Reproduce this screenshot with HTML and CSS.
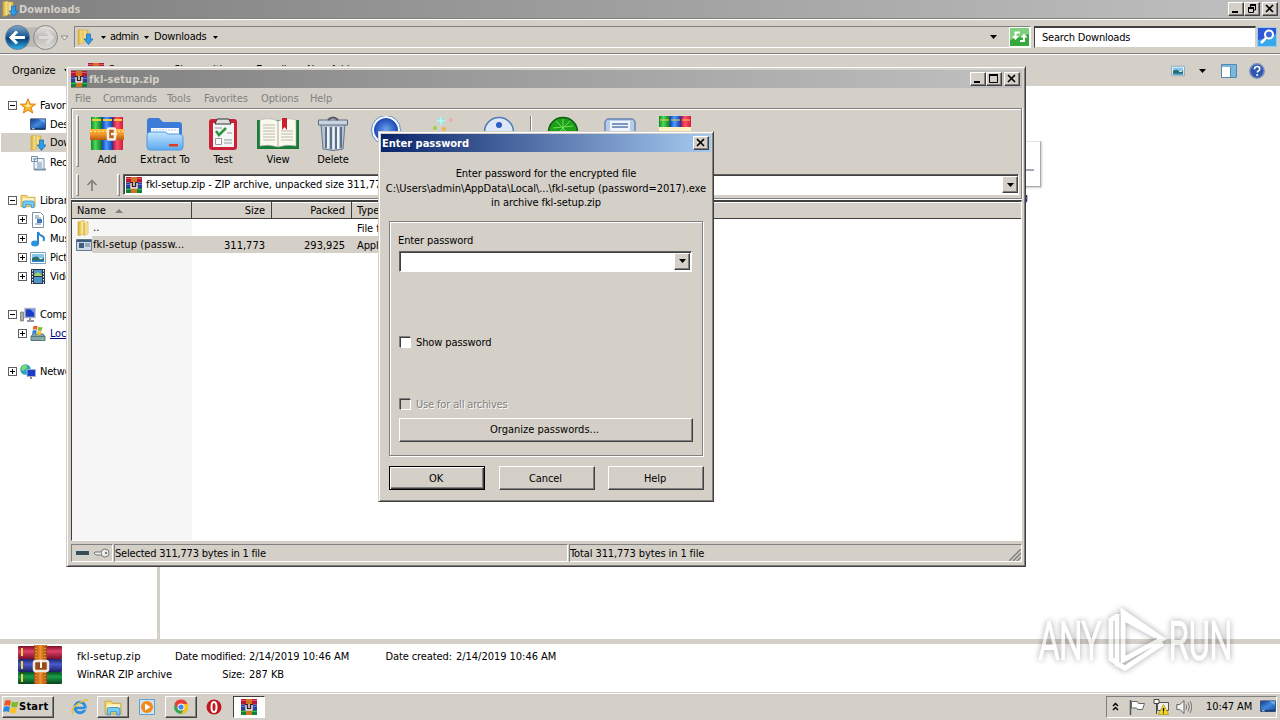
FILE: index.html
```html
<!DOCTYPE html>
<html lang="en">
<head>
  <meta charset="UTF-8">
  <title>Downloads</title>
  <link rel="stylesheet" href="styles.css">
</head>
<body>
  <svg class="defs" width="0" height="0">
    <defs>
      <linearGradient id="gFolder" x1="0" x2="1"><stop offset="0" stop-color="#d9ab2e"/><stop offset=".5" stop-color="#fdf0a8"/><stop offset="1" stop-color="#e2bd4c"/></linearGradient>
      <linearGradient id="gBlueFolder" x1="0" y1="0" x2="0" y2="1"><stop offset="0" stop-color="#c4e6ff"/><stop offset="1" stop-color="#5aa9ee"/></linearGradient>
      <linearGradient id="gNav" x1="0" y1="0" x2="0" y2="1"><stop offset="0" stop-color="#7fa6c4"/><stop offset=".45" stop-color="#1c5a94"/><stop offset=".55" stop-color="#0b3d78"/><stop offset="1" stop-color="#2fb5ee"/></linearGradient>
      <linearGradient id="gNavOff" x1="0" y1="0" x2="0" y2="1"><stop offset="0" stop-color="#e4e2de"/><stop offset=".5" stop-color="#bdbbb7"/><stop offset="1" stop-color="#dedcd8"/></linearGradient>
      <linearGradient id="gRed" x1="0" x2="1"><stop offset="0" stop-color="#b5123a"/><stop offset=".4" stop-color="#ff5068"/><stop offset="1" stop-color="#d01c3c"/></linearGradient>
      <linearGradient id="gGreen" x1="0" x2="1"><stop offset="0" stop-color="#0c8a2c"/><stop offset=".4" stop-color="#4fd85c"/><stop offset="1" stop-color="#0b7524"/></linearGradient>
      <linearGradient id="gBlue" x1="0" x2="1"><stop offset="0" stop-color="#1440b4"/><stop offset=".4" stop-color="#4c9cff"/><stop offset="1" stop-color="#1038a8"/></linearGradient>
      <linearGradient id="gBookR" x1="0" y1="0" x2="0" y2="1"><stop offset="0" stop-color="#7d1026"/><stop offset=".4" stop-color="#e0406a"/><stop offset="1" stop-color="#7a0f28"/></linearGradient>
      <linearGradient id="gBookB" x1="0" y1="0" x2="0" y2="1"><stop offset="0" stop-color="#222468"/><stop offset=".4" stop-color="#4a5ccc"/><stop offset="1" stop-color="#1e1f60"/></linearGradient>
      <linearGradient id="gBookG" x1="0" y1="0" x2="0" y2="1"><stop offset="0" stop-color="#0a5022"/><stop offset=".4" stop-color="#18a048"/><stop offset="1" stop-color="#08401a"/></linearGradient>
      <linearGradient id="gBelt" x1="0" x2="1"><stop offset="0" stop-color="#a34a0e"/><stop offset=".5" stop-color="#f0922c"/><stop offset="1" stop-color="#9a420c"/></linearGradient>
      <linearGradient id="gStrap" x1="0" y1="0" x2="0" y2="1"><stop offset="0" stop-color="#ffc23c"/><stop offset=".5" stop-color="#f0942c"/><stop offset="1" stop-color="#b85a10"/></linearGradient>
      <linearGradient id="gScreen" x1="0" y1="0" x2="1" y2="1"><stop offset="0" stop-color="#123a88"/><stop offset=".5" stop-color="#4288dc"/><stop offset="1" stop-color="#1448a0"/></linearGradient>
      <radialGradient id="gBall"><stop offset="0" stop-color="#6fa4f0"/><stop offset="1" stop-color="#1c4cb8"/></radialGradient>
    </defs>
    <symbol id="rar" viewBox="0 0 46 40">
      <rect x="1" y="1" width="44" height="13" rx="1" fill="url(#gBookR)"/><rect x="1" y="14" width="44" height="13" rx="1" fill="url(#gBookB)"/><rect x="1" y="27" width="44" height="12" rx="1" fill="url(#gBookG)"/>
      <path d="M4 3h2v8H4zM4 16h2v8H4zM4 29h2v8H4z" fill="#f3d24a"/>
      <rect x="17" width="13" height="39" fill="url(#gBelt)"/>
      <path d="M19 0v13M28 0v13M19 27v12M28 27v12" stroke="#ffd27a" stroke-dasharray="1 2"/>
      <rect x="17" y="16" width="14" height="10" rx="2" fill="#9a4a14" stroke="#eeeae2" stroke-width="2.5"/><path d="M24 15v8" stroke="#fff" stroke-width="2"/>
    </symbol>
    <symbol id="rar16" viewBox="0 0 16 16">
      <path fill="#b81838" d="M0 0h16v5.500H0z"/><path fill="#2c3ca0" d="M0 5.500h16V11H0z"/><path fill="#128038" d="M0 11h16v5H0z"/>
      <path fill="#e05070" d="M0 1h16v1H0z"/><path fill="#5a78dc" d="M0 7h16v1H0z"/><path fill="#3ab858" d="M0 12h16v1H0z"/>
      <path fill="#d07420" d="M5 0h6v16H5z"/><path fill="#3c2020" d="M4 5h8v7H4z"/><path fill="none" stroke="#fff" stroke-width="1.3" d="M5 6v5h6V6M8 5v4"/>
    </symbol>
    <symbol id="folder" viewBox="0 0 16 16"><path fill="url(#gFolder)" stroke="#c9a33a" stroke-width=".6" d="M2 2l6-1.5V14l-5 1.5H2zM8 2h4v12l-4 1.5z"/><path d="M8 2l3 1v12" fill="none" stroke="#fff6c4"/></symbol>
    <symbol id="dl" viewBox="0 0 16 16"><path fill="url(#gFolder)" stroke="#cfa93f" stroke-width=".6" d="M1 1l5-1v14l-5 1.5zM6 1h5v12H6z"/><path fill="#2f9be8" stroke="#1668b0" stroke-width=".7" d="M9.500 5h4v5H16l-4.500 5.500L7 10h2.500z"/></symbol>
    <symbol id="lib" viewBox="0 0 17 16"><path fill="#f4da78" stroke="#c79a2e" stroke-width=".8" d="M1 2h6l1 2h8v10H1z"/><path d="M3 5h12v3H3z" fill="#fff6c8"/><path fill="#74cdf4" stroke="#348cc4" stroke-width=".8" d="M3 15V10q0-2 2-2h8q2 0 2 2v5h-3v-3H6v3z"/></symbol>
    <symbol id="winflag" viewBox="0 0 16 16"><path fill="#ee5a24" d="M2 2q3-2 6 0L7 7Q4 5.500 1 7z"/><path fill="#7ebc2c" d="M9 2.500q3 1.500 6.500 0L14 8q-3 1-6-.5z"/><path fill="#2a86dc" d="M1 8q3-1.500 6 0l-1 5q-3-1.500-6 0z"/><path fill="#fcc01c" d="M8 8.500q3 1.500 6 .3L12.500 14q-3 1-5.500-.5z"/></symbol>
    <symbol id="monitor" viewBox="0 0 17 14"><path fill="url(#gScreen)" stroke="#35507c" d="M.5.5h16v11H.5z"/><path fill="#8cc4ff" opacity=".6" d="M9 1h7v4z"/><path fill="#1c3c70" d="M1 10h15v2H1z"/><path fill="#d8e4f0" d="M2 10.500h3v1H2z"/></symbol>
    <symbol id="pic" viewBox="0 0 16 14"><path fill="#fff" stroke="#7fa0b8" d="M.5 1.500h15v11H.5z"/><path fill="#84c8f0" d="M2 3h12v4H2z"/><path fill="#2c6e6a" d="M2 7q5-3 7 0t5-1v5H2z"/><path fill="#2888c8" d="M2 9.500h12V11H2z"/></symbol>
    <symbol id="caret" viewBox="0 0 7 4"><path d="M0 0h7L3.500 4z"/></symbol>
    <symbol id="min" viewBox="0 0 12 10"><path d="M2 7h6v2H2z"/></symbol>
    <symbol id="max" viewBox="0 0 12 10"><path d="M1.500 1h8v7.500h-8z" fill="none" stroke="#000"/><path d="M1 0h9v2H1z"/></symbol>
    <symbol id="restore" viewBox="0 0 12 10"><path d="M4.500 3V1h5v5H8M2.500 4.500h5v4h-5z" fill="none" stroke="#000"/><path d="M4 0h6v2H4zM2 3h6v2H2z"/></symbol>
    <symbol id="x" viewBox="0 0 12 10"><path d="M2 1l7 7M9 1L2 8" stroke="#000" stroke-width="1.700"/></symbol>
  </svg>

  <div class="explorer">
    <div class="titlebar inactive">
      <svg class="i16"><use href="#dl"/></svg><span class="title">Downloads</span>
      <div class="winbtns"><b><svg><use href="#min"/></svg></b><b><svg><use href="#restore"/></svg></b><b class="close"><svg><use href="#x"/></svg></b></div>
    </div>
    <div class="addressbar">
      <svg class="nav" width="70" height="30" viewBox="0 0 70 30">
        <path d="M14 3q15 5 31 0v24q-16-5-31 0z" fill="#bcb9b3"/>
        <circle cx="16.500" cy="15.500" r="12" fill="url(#gNav)" stroke="#5f7f9a"/><path d="M10 15.500h14M16 9.500l-6 6 6 6" fill="none" stroke="#fff" stroke-width="3"/>
        <circle cx="44.500" cy="15.500" r="12" fill="url(#gNavOff)" stroke="#8a8884"/><path d="M38 15.500h13M45.500 9.500l6 6-6 6" fill="none" stroke="#dddbd7" stroke-width="3"/>
        <path d="M60 14h7l-3.500 4z" fill="#eee" stroke="#777" stroke-width=".8"/>
      </svg>
      <div class="crumbs">
        <svg class="i16"><use href="#dl"/></svg>
        <svg class="caret c1"><use href="#caret"/></svg><span class="c-admin">admin</span>
        <svg class="caret"><use href="#caret"/></svg><span class="c-down">Downloads</span>
        <svg class="caret"><use href="#caret"/></svg>
        <svg class="caret last"><use href="#caret"/></svg>
        <svg class="refresh" width="21" height="20"><path fill="#36a83e" stroke="#fff" d="M.5.5h20v19H.5z"/><path fill="#7ed07c" d="M1 1h19v6L1 13z"/><path d="M11 5.500H6.500v5M11 14h4V9" fill="none" stroke="#fff" stroke-width="2"/><path d="M3 9h7l-3.500 4zM11.500 10.500h7L15 6.500z" fill="#fff"/></svg>
      </div>
      <div class="search">Search Downloads</div>
      <svg class="searchbtn" width="20" height="20"><path fill="#2c56d4" stroke="#9cc8f4" d="M.5.500h19v19H.5z"/><path fill="#38a8ec" d="M1 13q9-1 18-6v12H1z"/><circle cx="12" cy="7.500" r="4" fill="#3a68dc" stroke="#fff" stroke-width="2"/><path d="M9 11l-5 5" stroke="#fff" stroke-width="2.500"/></svg>
    </div>
    <div class="cmdbar">
      <span class="t-org">Organize</span><svg class="caret c-org"><use href="#caret"/></svg>
      <svg class="i16 t-rar"><use href="#rar16"/></svg><span class="t-open">Open</span><span class="t-share">Share with</span><span class="t-mail">E-mail</span><span class="t-new">New folder</span>
      <svg class="t-view" width="14" height="12"><use href="#pic"/></svg><svg class="caret t-caret"><use href="#caret"/></svg>
      <svg class="t-pane" width="16" height="14"><path fill="#fff" stroke="#5486b4" d="M.5.5h15v13H.5z"/><path fill="#78b8dc" d="M10 3h5v10h-5zM1 1h14v2H1z"/><path d="M9.500 3v11" stroke="#5486b4"/></svg>
      <svg class="t-help" width="16" height="16"><circle cx="8" cy="8" r="7.200" fill="#2f56b0" stroke="#7990bc" stroke-width="1.500"/><path d="M5.500 6.200q0-2.700 2.700-2.700t2.500 2.400q0 1.300-1.400 2-1 .5-1 1.700" fill="none" stroke="#fff" stroke-width="1.700"/><circle cx="8.200" cy="12" r="1.100" fill="#fff"/></svg>
    </div>
    <div class="body">
      <div class="tree">
        <div class="node"><i class="pm minus"></i><svg class="i16"><path fill="#fcb82c" stroke="#e07a14" d="M8 .8l2 5.200 5.500.2-4.300 3.500 1.500 5.300L8 12l-4.700 3 1.500-5.300L.5 6.200 6 6z"/><path fill="#ffe68a" d="M8 3l1.200 4H12L8 9.500 4 7h3z"/></svg><span>Favorites</span></div>
        <div class="node sub"><svg class="i16"><use href="#monitor"/></svg><span>Desktop</span></div>
        <div class="node sub on"><svg class="i16"><use href="#dl"/></svg><span>Downloads</span></div>
        <div class="node sub"><svg class="i16"><path fill="#eef3f8" stroke="#7890a8" d="M5 3.500h9v11H4v-8zM1.500 1.500h6v5h-6z"/><path d="M7 8h5M7 10h5M7 12h5M3 4h3" stroke="#6c94b8"/><path d="M4 14.500h12" stroke="#7890a8" stroke-width="2"/></svg><span>Recent Places</span></div>
        <div class="node gap"><i class="pm minus"></i><svg class="i16"><use href="#lib"/></svg><span>Libraries</span></div>
        <div class="node sub"><i class="pm"></i><svg class="i16"><path fill="#fff" stroke="#8090a0" d="M2.500.5h8l3 3v12h-11z"/><path d="M5 4h4M5 6h6M5 12h6" stroke="#6888a8"/><path fill="#3c7cc4" d="M7 7h5v4H7z"/></svg><span>Documents</span></div>
        <div class="node sub"><i class="pm"></i><svg class="i16"><ellipse cx="5" cy="12.500" rx="4" ry="3" fill="#2a94dc"/><path d="M8 13V1q1 3 4 4t1.500 5" fill="none" stroke="#2a84cc" stroke-width="2"/></svg><span>Music</span></div>
        <div class="node sub"><i class="pm"></i><svg class="i16"><use href="#pic"/></svg><span>Pictures</span></div>
        <div class="node sub"><i class="pm"></i><svg class="i16"><path fill="#283848" d="M1 0h14v15H1z"/><path fill="#4c94cc" d="M4 1h8v6H4zM4 8h8v6H4z"/><path d="M2.500 1v14M13.500 1v14" stroke="#fff" stroke-dasharray="1.500 1.500"/><path fill="#a8d060" d="M5 5l3-2 4 3v1H4z"/></svg><span>Videos</span></div>
        <div class="node gap"><i class="pm minus"></i><svg class="i16"><path fill="#a8b0a8" stroke="#687068" stroke-width=".7" d="M.5 5h3v9h-3z"/><path fill="#1c3cc4" stroke="#a8b4c4" stroke-width="1.500" d="M5 1.500h10v9H5z"/><path fill="#6c98f8" d="M10 2h4v4z"/><path d="M10 11v2M7 14h7" stroke="#9098a8" stroke-width="2"/></svg><span>Computer</span></div>
        <div class="node sub link"><i class="pm"></i><svg class="i16"><path fill="#88a4ac" stroke="#587880" d="M1 10.500h14v4H1zM3 8h10l2 2.500H1z"/><use href="#winflag" width="11" height="11" x="2" y="-1"/><path d="M11 13h3" stroke="#6ef05c"/></svg><span>Local Disk (C:)</span></div>
        <div class="node gap"><i class="pm"></i><svg class="i16"><circle cx="5.500" cy="5.500" r="5.300" fill="#28a4b8"/><path fill="#7cd86c" d="M2 2q4-2 5 0T3 7q-3-1-1-5z"/><path fill="#1c3ccc" stroke="#a4b4cc" d="M7 5.500h8.500v7H7z"/><path d="M11 13v2" stroke="#888" stroke-width="2"/></svg><span>Network</span></div>
      </div>
      <div class="files">
        <div class="thumb"><span></span></div>
        <div class="fname">setup.png</div>
      </div>
    </div>
    <div class="details">
      <svg class="d-icon" width="46" height="40"><use href="#rar"/></svg>
      <div class="d-col"><span class="d-name">fkl-setup.zip</span><span>WinRAR ZIP archive</span></div>
      <div class="d-keys"><span>Date modified:</span><span>Size:</span></div>
      <div class="d-vals"><span>2/14/2019 10:46 AM</span><span>287 KB</span></div>
      <div class="d-keys k2"><span>Date created:</span></div>
      <div class="d-vals"><span>2/14/2019 10:46 AM</span></div>
    </div>
  </div>

  <div class="taskbar">
    <div class="start"><svg class="i16"><use href="#winflag"/></svg><span>Start</span></div>
    <svg class="q q-ie" width="18" height="16"><circle cx="9" cy="8.500" r="5.200" fill="none" stroke="#2a8fe0" stroke-width="3"/><path d="M5 9h9" stroke="#2a8fe0" stroke-width="2.500"/><path d="M11 11h4l-1-2h2z" fill="#d4d0c8"/><path d="M2 15q-3-5 5-10t10-4" fill="none" stroke="#e8c030" stroke-width="1.500"/></svg>
    <div class="task"><svg class="i18"><use href="#lib"/></svg></div>
    <svg class="q q-wmp" width="16" height="16"><path fill="#cfe4f4" stroke="#5ca0d4" d="M.5.500h15v15H.5z"/><circle cx="8" cy="8" r="6" fill="#f08a18"/><path fill="#fff" d="M6 4.500l5.500 3.500L6 11.500z"/></svg>
    <div class="task t2"><svg class="i16" viewBox="0 0 16 16"><circle cx="8" cy="8" r="7" fill="#34a853"/><path fill="#e84033" d="M1.500 5A7 7 0 0 1 14.500 5H8l-3 5z"/><path fill="#fbc118" d="M14.500 5H8l3 5-3 5a7 7 0 0 0 6.500-10z"/><circle cx="8" cy="8" r="3.500" fill="#fff"/><circle cx="8" cy="8" r="2.600" fill="#4285f4"/></svg></div>
    <svg class="q q-op" width="16" height="16"><circle cx="8" cy="8" r="7.500" fill="#c4151c"/><ellipse cx="8" cy="8" rx="2.500" ry="5" fill="#c4151c" stroke="#fff" stroke-width="2"/></svg>
    <div class="task pressed"><svg class="i16"><use href="#rar16"/></svg></div>
    <div class="tray">
      <svg width="8" height="10"><path d="M1 4l2.500-2.500L6 4M1 8l2.500-2.500L6 8" fill="none" stroke="#000" stroke-width="1.500"/></svg>
      <svg class="flag" width="17" height="16"><path d="M1.500 1v15" stroke="#555" stroke-width="1.500"/><path fill="#fff" stroke="#666" d="M2.500 2.500h6l1 2h6l-2 6h-5l-1-1.500h-5z"/></svg>
      <svg class="net" width="16" height="16"><path fill="#eee" stroke="#555" d="M4.500 3.500h11v8h-11z"/><path fill="#fff" stroke="#444" d="M1 .5h5v4H1zM3.500 5v10"/><path fill="#fcd920" stroke="#a88c10" stroke-width=".7" d="M10.500 5.500l5.200 10H5.300z"/><path d="M10.500 9v3.500M10.500 13.500v1" stroke="#000" stroke-width="1.300"/></svg>
      <svg class="vol" width="16" height="16"><path fill="#f4f4f4" stroke="#666" d="M.8 5.500h3L8 1.500v13l-4.200-4h-3z"/><path d="M10 5.500q1.500 2.500 0 5M12 3.500q3 4.500 0 9M14 2q3.500 6 0 12" fill="none" stroke="#777"/></svg>
      <span class="clock">10:47 AM</span>
      <svg class="desk" width="16" height="14"><use href="#monitor"/></svg>
    </div>
  </div>

  <div class="winrar">
    <div class="titlebar inactive">
      <svg class="i16"><use href="#rar16"/></svg><span class="title">fkl-setup.zip</span>
      <div class="winbtns"><b><svg><use href="#min"/></svg></b><b><svg><use href="#max"/></svg></b><b class="close"><svg><use href="#x"/></svg></b></div>
    </div>
    <div class="menu"><span>File</span><span>Commands</span><span>Tools</span><span>Favorites</span><span>Options</span><span>Help</span></div>
    <div class="rebar">
      <div class="tools">
        <i class="grip"></i>
        <div class="tool add"><svg width="36" height="36"><path fill="url(#gGreen)" d="M2 1h11v33H2z"/><path fill="url(#gBlue)" d="M13 1h11v33H13z"/><path fill="url(#gRed)" d="M24 1h10v33H24z"/><path d="M3 4h9M14 4h9M25 4h8" stroke="#f4cc3c" stroke-width="2"/><path fill="url(#gStrap)" d="M1 13h34v11H1z"/><path d="M1 15.500h34" stroke="#ffe08c" stroke-dasharray="2 2"/><rect x="19" y="12.500" width="7" height="11" rx="1" fill="#b8641c" stroke="#f6f0e4" stroke-width="2.500"/><path d="M22 18h6" stroke="#f6f0e4" stroke-width="2.500"/></svg><span>Add</span></div>
        <div class="tool ext"><svg width="38" height="36"><path fill="#3c7cd8" d="M1 5q0-3 3-3h9l4 4h16q3 0 3 3v20H1z"/><path fill="#fff" d="M5 12h28v10H5z"/><path d="M7 14h25" stroke="#aac8e0" stroke-dasharray="2 1"/><path fill="url(#gBlueFolder)" stroke="#4c98e4" d="M1 19q0-3 3-3h15l3 2h11q4 0 4 3v10q0 3-3 3H4q-3 0-3-3z"/><path fill="#dc3c24" d="M23 28h9v2.500h-9z"/></svg><span>Extract To</span></div>
        <div class="tool tst"><svg width="32" height="36"><rect x="2" y="3" width="28" height="31" rx="3" fill="#cc1f38"/><path fill="#f4f6f6" d="M6 7h21v24H6z"/><path fill="#ddd" stroke="#333" d="M10 3h12l2 5H8z"/><path d="M9 15l3 4 7-7" fill="none" stroke="#2c9444" stroke-width="2.500"/><path d="M8 12h7M20 17h5M17 24h8M17 27h8" stroke="#999"/><path fill="#fff" stroke="#999" d="M8.500 22.500h6v6h-6z"/></svg><span>Test</span></div>
        <div class="tool vw"><svg width="44" height="36"><path fill="#187c38" d="M1 4h42v29H1z"/><path fill="#fbf8ee" stroke="#aaa" stroke-width=".6" d="M4 4q9-3 18 1 9-4 18-1v26q-9-2-18 1-9-3-18-1z"/><path d="M22 5v26" stroke="#aaa"/><path d="M7 9h12M7 12h12M7 15h12M7 18h12M7 21h12M7 24h12M25 15h12M25 18h12M25 21h12M25 24h12" stroke="#b8b8b0"/><path fill="#c8202c" d="M26 2h5v12l-2.500-3-2.500 3z"/></svg><span>View</span></div>
        <div class="tool del"><svg width="32" height="36"><path fill="#b4c4d4" stroke="#68788c" d="M4 8h24l-2 25q-10 3-20 0z"/><path d="M9 11v21M14 11v22M19 11v22M24 11v21" stroke="#5c7088" stroke-width="2"/><path d="M11 11v21M16.500 11v22M21 11v22" stroke="#eef4fa" stroke-width="2"/><path fill="#c8d4e0" stroke="#5c6c80" d="M1.500 4h29v5h-29z"/><path d="M11 4q5-5 10 0" fill="none" stroke="#556" stroke-width="2"/></svg><span>Delete</span></div>
        <svg class="big fnd" width="32" height="34"><circle cx="16" cy="14" r="14.500" fill="#f4f8ff" stroke="#5c8cd0"/><circle cx="16" cy="14" r="11.500" fill="url(#gBall)" stroke="#2450a8"/></svg>
        <svg class="big wiz" width="32" height="34"><circle cx="16" cy="5" r="3.500" fill="#8ce4e8" opacity=".8"/><circle cx="26" cy="4" r="2" fill="#f0b0b0"/><circle cx="10" cy="12" r="2" fill="#9cd03c"/><circle cx="19" cy="13" r="2" fill="#f0b050"/><path d="M16 1v8M12 5h8" stroke="#c8ffff"/></svg>
        <svg class="big inf" width="32" height="34"><circle cx="16" cy="16" r="14.500" fill="#dce8f8" stroke="#5078b4" stroke-width="1.500"/><circle cx="16" cy="9" r="3" fill="#2c60c0"/><path fill="#2c60c0" d="M13 15h6v12h-6z"/></svg>
        <i class="tsep"></i>
        <svg class="big vir" width="32" height="34"><circle cx="16" cy="16" r="14.500" fill="#1fa01c" stroke="#0c5c10" stroke-width="1.500"/><path d="M6 12l20-2M9 5l14 14M16 3v26M23 5L9 19" stroke="#6ce04c"/></svg>
        <svg class="big com" width="34" height="34"><rect x="2" y="3" width="30" height="26" rx="4" fill="#b8cce8" stroke="#6484b4" stroke-width="1.500"/><path fill="#eef4fc" d="M7 5h20v20H7z"/><path d="M9 8h16M9 11h16" stroke="#5878a8" stroke-width="1.500"/></svg>
        <svg class="big sfx" width="34" height="34"><path fill="url(#gGreen)" d="M1 0h11v12H1z"/><path fill="url(#gBlue)" d="M12 0h11v12H12z"/><path fill="url(#gRed)" d="M23 0h10v12H23z"/><path fill="#fff0c0" d="M1 11h32v12H1z"/><path d="M2 4h9M13 4h9M24 4h8" stroke="#f8d040"/></svg>
      </div>
      <div class="pathrow">
        <i class="grip"></i>
        <svg class="up" width="14" height="14"><path d="M7 13V3M2.500 7L7 2.500 11.500 7" fill="none" stroke="#808080" stroke-width="1.700"/></svg>
        <i class="grip"></i>
        <div class="combo"><svg class="i16"><use href="#rar16"/></svg><span>fkl-setup.zip - ZIP archive, unpacked size 311,773 bytes</span><b class="drop"><svg class="caret"><use href="#caret"/></svg></b></div>
      </div>
    </div>
    <div class="list">
      <div class="lhead"><div class="cn">Name<svg width="8" height="4"><path d="M0 4h8L4 0z" fill="#808080"/></svg></div><div class="cs">Size</div><div class="cp">Packed</div><div class="ct">Type</div></div>
      <div class="lrow"><div class="cn"><svg class="i16"><use href="#folder"/></svg><span class="dots">..</span></div><div class="cs"></div><div class="cp"></div><div class="ct">File folder</div></div>
      <div class="lrow sel"><div class="cn"><svg class="i16"><path fill="#d0d8e4" stroke="#607890" d="M.5 2.500h15v11H.5z"/><path fill="#3c5c84" d="M1 3h14v2H1zM3 6h5v5H3z"/><path d="M9 7h5M9 9h5" stroke="#607890"/></svg><span>fkl-setup (passw...</span></div><div class="cs">311,773</div><div class="cp">293,925</div><div class="ct">Application</div></div>
    </div>
    <div class="status">
      <div class="s-ico"><svg width="40" height="14"><path fill="#3c4c54" stroke="#c8d8e0" d="M3.500 4.500h14v5h-14z"/><circle cx="33" cy="7" r="4" fill="#eee" stroke="#777"/><circle cx="34" cy="7" r="1.200" fill="#777"/><path d="M29 6h-6l-1 1 2 2h5" fill="#eee" stroke="#777"/></svg></div>
      <div class="s1">Selected 311,773 bytes in 1 file</div>
      <div class="s2"><span>Total 311,773 bytes in 1 file</span><svg width="12" height="12"><path d="M0 12L12 0M4 12l8-8M8 12l4-4" stroke="#808080" stroke-width="1.500"/></svg></div>
    </div>
  </div>

  <div class="dialog">
    <div class="titlebar active"><span class="title">Enter password</span><div class="winbtns"><b class="close"><svg><use href="#x"/></svg></b></div></div>
    <div class="msg"><p class="m1">Enter password for the encrypted file</p><p class="m2">C:\Users\admin\AppData\Local\...\fkl-setup (password=2017).exe</p><p class="m3">in archive fkl-setup.zip</p></div>
    <div class="group">
      <label class="lbl">Enter password</label>
      <div class="combo"><b class="drop"><svg class="caret"><use href="#caret"/></svg></b></div>
      <div class="check show"><i></i><span>Show password</span></div>
      <div class="check all"><i></i><span>Use for all archives</span></div>
      <div class="btn wide">Organize passwords...</div>
    </div>
    <div class="buttons"><div class="btn default">OK</div><div class="btn">Cancel</div><div class="btn">Help</div></div>
  </div>

  <svg class="watermark" width="220" height="84" viewBox="0 0 220 84">
    <g class="wm">
      <text x="8" y="59" textLength="62" lengthAdjust="spacingAndGlyphs">ANY</text>
      <text x="138" y="59" textLength="63" lengthAdjust="spacingAndGlyphs">RUN</text>
      <path d="M84 17l-4 3v39l6 4M92 12v48l39-21zM92 18l33 18M86 14v50l8 4 38-25" fill="none"/>
    </g>
  </svg>
</body>
</html>
```
FILE: styles.css
```css
* { box-sizing: border-box; }
body {
  margin: 0;
  width: 1280px;
  height: 720px;
  overflow: hidden;
  display: flex;
  flex-direction: column;
  background: #fff;
  color: #000;
  font: 11px/14px "DejaVu Sans Condensed", "DejaVu Sans", sans-serif;
  font-stretch: condensed;
  letter-spacing: -0.1px;
  white-space: nowrap;
}
svg { display: block; flex: none; }
.defs { position: absolute; }
.i16 { width: 16px; height: 16px; }
.i18 { width: 18px; height: 17px; }
.caret { width: 7px; height: 4px; }
p { margin: 0; }

/* title bars */
.titlebar { height: 18px; display: flex; align-items: center; flex: none; font-weight: bold; letter-spacing: 0.05px; }
.inactive { background: linear-gradient(90deg, #808080, #c0c0c0); color: #d4d0c8; }
.active { background: linear-gradient(90deg, #0a246a, #a6caf0); color: #fff; }
.winbtns { margin-left: auto; display: flex; }
.winbtns b, .drop {
  width: 16px;
  height: 14px;
  background: #d4d0c8;
  border: 1px solid;
  border-color: #fff #404040 #404040 #fff;
  box-shadow: inset -1px -1px #808080;
}
.winbtns svg { width: 12px; height: 10px; margin: 1px; }
.winbtns .close { margin-left: 2px; }

/* explorer window */
.explorer { height: 693px; display: flex; flex-direction: column; }
.explorer > .titlebar { padding: 0 2px 0 2px; }
.explorer > .titlebar .title { margin-left: 1px; padding-top: 1px; }
.addressbar {
  height: 36px;
  display: flex;
  align-items: flex-start;
  background: #d4d0c8;
  border-top: 1px solid #808080;
  border-bottom: 1px solid #808080;
  box-shadow: inset 0 1px #fff;
  padding-top: 7px;
}
.nav { margin-top: -4px; margin-left: 1px; }
.crumbs { width: 957px; height: 22px; margin-left: 3px; display: flex; align-items: center; border: 1px solid; border-color: #808080 #fff #fff #808080; padding-left: 2px; }
.crumbs .caret, .c-org { width: 5px; height: 3px; margin-left: 1px; margin-right: 1px; }
.crumbs .c1 { margin-left: 8px; }
.crumbs span { margin-right: 4px; letter-spacing: -0.2px; }
.c-admin { width: 29px; margin-left: 3px; }
.crumbs .c-admin { letter-spacing: -0.5px; }
.c-down { width: 54px; margin-left: 4px; }
.crumbs .last { width: 7px; height: 4px; margin-left: auto; margin-right: 12px; }
.search { width: 222px; height: 22px; margin-left: 3px; background: #fff; border: 1px solid; border-color: #404040 #d4d0c8 #d4d0c8 #404040; border-top-width: 2px; padding: 3px 0 0 7px; letter-spacing: -0.2px; }
.searchbtn { margin: 1px 0 0 1px; }
.cmdbar { height: 32px; flex: none; display: flex; align-items: center; background: #d4d0c8; border-top: 1px solid #fff; padding-left: 12px; }
.t-org { width: 51px; }
.t-rar { margin-left: 18px; }
.t-open { width: 66px; margin-left: 4px; }
.t-share { width: 82px; }
.t-mail { width: 51px; }
.t-open, .t-share, .t-mail, .t-new { margin-top: -2px; }
.t-view { margin-left: auto; }
.t-caret { margin-left: 14px; }
.t-pane { margin-left: 15px; }
.t-help { margin: 0 15px 0 12px; }
.body { height: 553px; display: flex; }
.tree { width: 160px; border-right: 3px solid #d4d0c8; padding-top: 10px; }
.node { height: 19px; display: flex; align-items: center; padding-left: 8px; letter-spacing: -0.2px; }
.node.sub { padding-left: 29px; margin-left: 1px; }
.node.gap { margin-top: 19px; }
.node span { margin-left: 4px; }
.node.on { background: #d4d0c8; margin-top: -1px; padding-top: 1px; margin-bottom: 1px; }
.node.link { color: #000080; text-decoration: underline; }
.pm {
  width: 9px;
  height: 9px;
  margin-right: 3px;
  border: 1px solid #606060;
  flex: none;
  background: linear-gradient(#000, #000) 1px 3px / 5px 1px no-repeat, linear-gradient(#000, #000) 3px 1px / 1px 5px no-repeat;
}
.pm.minus { background: linear-gradient(#000, #000) 1px 3px / 5px 1px no-repeat; }
.sub .pm { margin-left: -12px; margin-right: 3px; }
.files { flex: 1; display: flex; flex-direction: column; padding: 55px 0 0 785px; }
.thumb { width: 96px; height: 46px; background: #fff; border: 1px solid #e4e4e4; border-right-color: #aaa; border-bottom-color: #aaa; box-shadow: 1px 1px 2px #ccc; padding: 27px 0 0 76px; }
.thumb span { display: block; width: 12px; height: 2px; background: #a8a8bc; }
.fname { width: 83px; margin-top: 4px; text-align: right; }
.details { height: 54px; display: flex; border-top: 5px solid #d4d0c8; border-bottom: 1px solid #d4d0c8; padding-top: 1px; }
.d-icon { margin-left: 17px; }
.d-col { width: 98px; margin-left: 14px; padding-top: 1px; }
.details span { display: block; margin-top: 2px; height: 16px; line-height: 18px; }
.details .d-name { letter-spacing: 0.25px; }
.d-keys { width: 70px; text-align: right; letter-spacing: -0.2px; padding-top: 1px; }
.d-vals { width: 136px; margin-left: 4px; letter-spacing: -0.03px; padding-top: 1px; }
.k2 { width: 67px; letter-spacing: -0.1px; }

/* taskbar */
.taskbar { height: 27px; flex: none; display: flex; align-items: center; background: #d4d0c8; border-top: 1px solid #fff; padding: 0 3px 0 2px; }
.start, .task { height: 22px; display: flex; align-items: center; border: 1px solid; border-color: #fff #404040 #404040 #fff; box-shadow: inset -1px -1px #808080; }
.start { width: 52px; font-weight: bold; padding-left: 0; letter-spacing: 0.25px; }
.q-ie { margin-left: 17px; }
.task { width: 32px; justify-content: center; margin-left: 8px; }
.q-wmp { margin-left: 10px; }
.task.t2 { margin-left: 10px; }
.q-op { margin-left: 9px; }
.task.pressed { margin-left: 11px; border-color: #404040 #fff #fff #404040; background: #fff; box-shadow: none; }
.tray { width: 171px; height: 22px; margin-left: auto; display: flex; align-items: center; border: 1px solid; border-color: #808080 #fff #fff #808080; padding-left: 5px; letter-spacing: -0.1px; }
.flag { margin-left: 9px; }
.net { margin-left: 7px; }
.vol { margin-left: 7px; }
.clock { width: 47px; margin-left: 14px; }
.desk { margin-left: 8px; }

/* archive window */
.winrar {
  position: absolute;
  left: 66px;
  top: 66px;
  width: 960px;
  height: 501px;
  display: flex;
  flex-direction: column;
  background: #d4d0c8;
  border: 1px solid;
  border-color: #d4d0c8 #404040 #404040 #d4d0c8;
  box-shadow: inset 1px 1px #fff, inset -1px -1px #808080;
  padding: 3px 3px 3px 4px;
}
.winrar > .titlebar .title { margin-left: 2px; padding-top: 1px; letter-spacing: 0.05px; }
.winrar > .titlebar { padding-right: 2px; }
.menu { height: 20px; display: flex; color: #808080; padding: 4px 0 0 4px; }
.menu span:nth-child(1) { width: 28px; }
.menu span:nth-child(2) { width: 64px; letter-spacing: -0.3px; }
.menu span:nth-child(3) { width: 37px; }
.menu span:nth-child(4) { width: 57px; }
.menu span:nth-child(5) { width: 49px; }
.rebar { height: 91px; border: 1px solid #808080; box-shadow: inset 1px 1px #fff, 0 1px #fff, 1px 0 #fff; }
.tools { height: 63px; display: flex; padding: 7px 0 0 4px; }
.grip { width: 3px; height: 52px; border: 1px solid; border-color: #fff #808080 #808080 #fff; flex: none; }
.tools .grip { margin-top: -1px; }
.tool { display: flex; flex-direction: column; align-items: center; }
.tool span { margin-top: 1px; }
.add { width: 40px; margin-left: 8px; }
.ext { width: 60px; margin-left: 8px; letter-spacing: 0.1px; }
.tst { width: 34px; margin-left: 11px; }
.vw { width: 46px; margin-left: 15px; }
.del { width: 40px; margin-left: 12px; letter-spacing: -0.2px; }
.fnd { margin-left: 17px; }
.wiz { margin-left: 23px; }
.inf { margin-left: 26px; }
.tsep { height: 50px; border-left: 1px solid #808080; border-right: 1px solid #fff; margin-left: 15px; }
.vir { margin-left: 15px; }
.com { margin-left: 24px; }
.sfx { margin-left: 21px; }
.pathrow { height: 26px; display: flex; align-items: center; padding: 0 2px 0 4px; }
.pathrow .grip { height: 22px; }
.up { margin: 0 18px 0 6px; }
.combo { display: flex; align-items: center; background: #fff; border: 1px solid; border-color: #606060 #fff #fff #606060; box-shadow: inset 1px 1px #404040; }
.drop { display: flex; align-items: center; justify-content: center; margin-left: auto; height: 17px; }
.pathrow .combo { flex: 1; height: 21px; margin-left: 3px; padding-left: 2px; }
.combo span { margin-left: 4px; letter-spacing: -0.1px; }
.list { height: 342px; margin-top: 1px; border: 1px solid; border-color: #404040 #fff #fff #404040; border-top-width: 2px; background: linear-gradient(#f6f6f6, #f6f6f6) 0 0 / 120px 100% no-repeat #fff; }
.lhead, .lrow { display: flex; height: 17px; line-height: 17px; padding-top: 1px; }
.lhead { background: #d4d0c8; border-bottom: 1px solid #404040; box-shadow: inset 0 1px #fff; padding-top: 0; }
.cn { width: 120px; display: flex; align-items: center; padding-left: 4px; }
.cs, .cp { width: 80px; text-align: right; padding-right: 7px; letter-spacing: 0; }
.ct { padding-left: 5px; }
.lhead > div { height: 16px; line-height: 18px; }
.lhead > div:not(.ct) { border-right: 1px solid #404040; padding-right: 6px; }
.lhead .cn { padding-left: 5px; padding-top: 2px; }
.lhead svg { margin-left: 9px; }
.cn span { margin-left: 1px; letter-spacing: 0.1px; }
.sel { width: 620px; background: linear-gradient(#d4d0c8, #d4d0c8) 20px 0 no-repeat; }
.status { height: 20px; margin-top: 2px; display: flex; gap: 1px; letter-spacing: -0.2px; }
.status div { height: 18px; margin-top: 1px; border: 1px solid; border-color: #808080 #fff #fff #808080; line-height: 18px; padding-left: 0; }
.status .s-ico { width: 42px; padding: 1px 0 0; }
.s1 { width: 454px; }
.s2 { flex: 1; display: flex; justify-content: space-between; align-items: flex-start; }
.s2 span { letter-spacing: -0.1px; }
.s2 svg { margin-top: 4px; }

/* password dialog */
.dialog {
  position: absolute;
  left: 378px;
  top: 131px;
  width: 336px;
  height: 371px;
  background: #d4d0c8;
  border: 1px solid;
  border-color: #d4d0c8 #404040 #404040 #d4d0c8;
  box-shadow: inset 1px 1px #fff, inset -1px -1px #808080;
  padding: 2px;
}
.dialog .titlebar { padding: 0 2px 0 1px; letter-spacing: 0; }
.dialog .title { padding-top: 1px; }
.msg { margin-top: 15px; text-align: center; line-height: 14.5px; }
.m2 { letter-spacing: -0.03px; }
.group { height: 235px; margin: 10px 8px 0 8px; border: 1px solid #808080; box-shadow: inset 1px 1px #fff, 1px 1px #fff; padding: 12px 8px 0 8px; }
.dialog .combo { width: 293px; height: 21px; margin: 3px 0 0 1px; padding: 0 1px 0 0; }
.lbl { display: block; }
.check { display: flex; align-items: center; height: 14px; margin-left: 2px; }
.check i { width: 11px; height: 11px; border: 1px solid; border-color: #404040 #fff #fff #404040; background: #fff; box-shadow: -1px -1px #808080; }
.check span { margin-left: 5px; }
.show { margin-top: 64px; }
.all { margin-top: 48px; color: #808080; text-shadow: 1px 1px #fff; letter-spacing: -0.15px; }
.check.all i { background: #d4d0c8; }
.btn { width: 96px; height: 24px; line-height: 23px; padding-right: 2px; text-align: center; border: 1px solid; border-color: #fff #404040 #404040 #fff; box-shadow: inset -1px -1px #808080; }
.btn.wide { width: 294px; margin: 6px 0 0 1px; padding-right: 3px; line-height: 21px; letter-spacing: 0; }
.btn.default { border-color: #000; box-shadow: inset 1px 1px #fff, inset -1px -1px #404040, inset -2px -2px #808080; }
.buttons { display: flex; justify-content: space-between; margin: 10px 7px 0 8px; }

.watermark { position: absolute; left: 1031px; top: 600px; }
.wm { filter: drop-shadow(0 0 3px rgba(0, 0, 0, 0.6)); opacity: 0.6; }
.wm text { font: 300 51px Roboto, sans-serif; fill: #fff; stroke: #fff; stroke-width: 2.4; letter-spacing: 0; }
.wm path { stroke: #fff; stroke-width: 5; }
```
